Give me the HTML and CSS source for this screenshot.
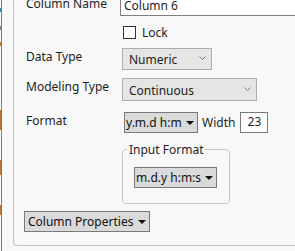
FILE: index.html
```html
<!DOCTYPE html>
<html lang="en">
<head>
    <meta charset="UTF-8">
    <title>Column Info</title>
    <link rel="stylesheet" href="styles.css">
</head>
<body>
<div class="edge"></div>
<div class="panel">
    <div class="row row-name">
        <span class="lbl">Column Name</span>
        <div class="name-box">Column 6</div>
    </div>
    <div class="row row-lock">
        <span></span>
        <div class="lock"><span class="check"></span>Lock</div>
    </div>
    <div class="row row-type">
        <span class="lbl">Data Type</span>
        <div class="combo combo-type"><span>Numeric</span>
            <svg class="chev" width="7" height="4" viewBox="0 0 7 4"><path d="M0.5 0.5 L3.5 3.5 L6.5 0.5" fill="none" stroke="#777" stroke-width="1"/></svg>
        </div>
    </div>
    <div class="row row-model">
        <span class="lbl">Modeling Type</span>
        <div class="combo combo-model"><span>Continuous</span>
            <svg class="chev" width="7" height="4" viewBox="0 0 7 4"><path d="M0.5 0.5 L3.5 3.5 L6.5 0.5" fill="none" stroke="#777" stroke-width="1"/></svg>
        </div>
    </div>
    <div class="row row-format">
        <span class="lbl">Format</span>
        <div class="format-line">
            <div class="drop drop-format"><span>y.m.d h:m</span><span class="tri"></span></div>
            <span class="width-lbl">Width</span>
            <div class="width-box">23</div>
        </div>
    </div>
    <div class="row row-input">
        <span></span>
        <fieldset class="group">
            <legend>Input Format</legend>
            <div class="drop drop-input"><span>m.d.y h:m:s</span><span class="tri"></span></div>
        </fieldset>
    </div>
    <div class="drop drop-props"><span>Column Properties</span><span class="tri"></span></div>
</div>
</body>
</html>
```

FILE: styles.css
```css
*{
    margin: 0;
    padding: 0;
    box-sizing: border-box;
}
html,body{
    width: 295px;
    height: 251px;
    overflow: hidden;
    background: #f8f8f8;
}
body{
    display: flex;
    align-items: flex-start;
    font-family: "Noto Sans", "Open Sans", sans-serif;
    font-size: 12px;
    line-height: 17px;
    color: #1e1e1e;
    white-space: nowrap;
}
.edge{
    flex: none;
    width: 2px;
    height: 251px;
    border-right: 1px solid #7d7d7d;
    background: linear-gradient(#f8f8f8 8px, #2b8a9a 8px, #2b8a9a 12px, #f8f8f8 12px, #f8f8f8 26px, #c87a2a 26px, #3a7cc8 30px, #f8f8f8 30px, #f8f8f8 42px, #c87a2a 42px, #c87a2a 46px, #f8f8f8 46px, #f8f8f8 110px, #b8742a 110px, #b8742a 130px, #f8f8f8 130px, #f8f8f8 160px, #b8742a 160px, #b8742a 175px, #f8f8f8 175px, #f8f8f8 205px, #b8742a 205px, #b8742a 215px, #f8f8f8 215px);
}
.panel{
    flex: none;
    margin-left: 11px;
    width: 300px;
    height: 246px;
    padding: 0 0 14px 10px;
    border-left: 1px solid #c3c3c3;
    border-bottom: 1px solid #c3c3c3;
    border-bottom-left-radius: 4px;
}
.row{
    display: grid;
    grid-template-columns: 98px auto;
    align-items: start;
}
.lbl{
    padding-left: 2px;
}
.row-name{
    margin-top: -6px;
}
.row-name .lbl{
    padding-top: 1px;
}
.name-box{
    margin-left: -2px;
    width: 200px;
    height: 22px;
    padding: 2px 3px;
    background: #fff;
    border: 1px solid #7f7f7f;
}
.row-lock{
    margin-top: 10px;
}
.lock{
    display: flex;
    align-items: center;
    height: 13px;
    margin-left: 1px;
}
.check{
    flex: none;
    width: 13px;
    height: 13px;
    background: #fff;
    border: 1px solid #333;
    margin-right: 6px;
}
.row-type{
    margin-top: 9px;
}
.row-model{
    margin-top: 8px;
}
.combo{
    display: flex;
    align-items: center;
    justify-content: space-between;
    padding: 1px 5px 0 6px;
    background: #e5e5e5;
    border: 1px solid #adadad;
}
.combo-type{
    width: 90px;
    height: 22px;
}
.combo-model{
    width: 135px;
    height: 23px;
}
.chev{
    flex: none;
    margin-top: -3px;
}
.row-format{
    margin-top: 11px;
}
.format-line{
    display: flex;
    align-items: flex-start;
}
.drop{
    display: flex;
    align-items: center;
    justify-content: space-between;
    height: 21px;
    padding: 0 3px 0 1px;
    background: #dadada;
    border: 1px solid #7a7a7a;
    color: #111;
}
.tri{
    flex: none;
    width: 0;
    height: 0;
    margin-left: 3px;
    border-left: 4px solid transparent;
    border-right: 4px solid transparent;
    border-top: 4px solid #111;
}
.drop-format{
    width: 74px;
    margin-left: 2px;
}
.width-lbl{
    margin-left: 4px;
    padding-top: 2px;
}
.width-box{
    width: 28px;
    height: 21px;
    margin-left: 5px;
    text-align: center;
    background: #fff;
    border: 1px solid #7a7a7a;
}
.row-input{
    margin-top: 8px;
}
.group{
    width: 108px;
    padding: 9px 12px 15px 11px;
    border: 1px solid #c8c8c8;
    border-radius: 4px;
}
.group legend{
    margin-left: -7px;
    padding: 0 2px;
}
.drop-input{
    width: 83px;
}
.drop-props{
    width: 126px;
    margin-top: 7px;
    padding-left: 3px;
}
```
